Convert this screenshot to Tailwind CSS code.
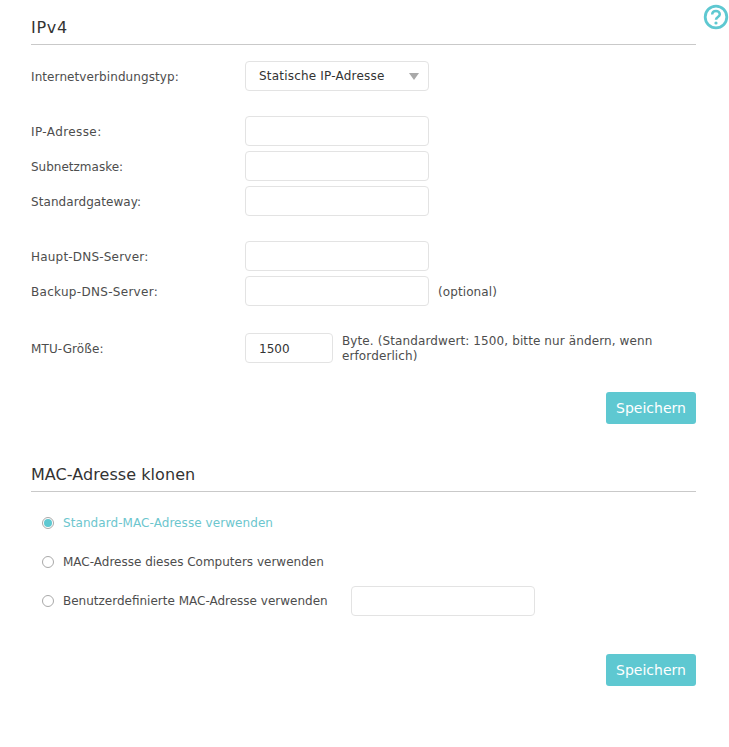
<!DOCTYPE html>
<html lang="en">
<head>
  <meta charset="UTF-8">
  <title>Internet</title>
  <script src="https://cdn.jsdelivr.net/npm/@tailwindcss/browser@4"></script>
</head>
<body class="bg-white text-[#4d4d4d] text-[12px] font-['DejaVu_Sans',sans-serif]">

<div class="relative w-[729px] h-[747px] overflow-hidden pl-[31px] pr-[33px]">
  <!-- Help icon -->
  <svg class="absolute left-[703px] top-[4px] w-[26px] h-[26px]" viewBox="0 0 26 26" fill="none" stroke="#5ec8d1">
    <circle cx="13" cy="13" r="10.8" stroke-width="2.8"/>
    <path d="M9.2 10.6c0-2.3 1.7-3.7 3.8-3.7s3.8 1.4 3.8 3.4c0 2.7-3.8 2.7-3.8 5.5" stroke-width="2.5"/>
    <circle cx="13" cy="19" r="1.6" fill="#5ec8d1" stroke="none"/>
  </svg>

  <!-- IPv4 -->
  <section class="pt-[17px]">
    <h2 class="h-[28px] border-b border-[#c9c9c9] text-[16px] leading-[22px] text-[#333] tracking-[0.7px]">IPv4</h2>

    <div class="mt-[16px] flex items-center h-[30px]">
      <label class="w-[214px] pt-[2px] tracking-[0.09px]">Internetverbindungstyp:</label>
      <div class="w-[184px] h-[30px] px-[13px] flex items-center justify-between border border-[#e3e3e3] rounded-[4px] text-[#333]">
        <span class="-mt-[1px] tracking-[0.2px]">Statische IP-Adresse</span>
        <span class="mr-[-4px] w-0 h-0 border-x-[5px] border-x-transparent border-t-[7px] border-t-[#a9a9a9]"></span>
      </div>
    </div>

    <div class="mt-[25px] flex flex-col gap-[5px]">
      <div class="flex items-center h-[30px]"><label class="w-[214px] pt-[2px] tracking-[0.4px]">IP-Adresse:</label><input class="w-[184px] h-[30px] border border-[#e3e3e3] rounded-[4px]"></div>
      <div class="flex items-center h-[30px]"><label class="w-[214px] pt-[2px]">Subnetzmaske:</label><input class="w-[184px] h-[30px] border border-[#e3e3e3] rounded-[4px]"></div>
      <div class="flex items-center h-[30px]"><label class="w-[214px] pt-[2px] tracking-[0.07px]">Standardgateway:</label><input class="w-[184px] h-[30px] border border-[#e3e3e3] rounded-[4px]"></div>
    </div>

    <div class="mt-[25px] flex flex-col gap-[5px]">
      <div class="flex items-center h-[30px]"><label class="w-[214px] pt-[2px] tracking-[0.2px]">Haupt-DNS-Server:</label><input class="w-[184px] h-[30px] border border-[#e3e3e3] rounded-[4px]"></div>
      <div class="flex items-center h-[30px]"><label class="w-[214px] pt-[2px] tracking-[0.3px]">Backup-DNS-Server:</label><input class="w-[184px] h-[30px] border border-[#e3e3e3] rounded-[4px]"><span class="ml-[9px] pt-[2px] tracking-[0.1px]">(optional)</span></div>
    </div>

    <div class="mt-[27px] flex items-center h-[30px]">
      <label class="w-[214px] pt-[2px] tracking-[0.1px]">MTU-Größe:</label>
      <input class="w-[88px] h-[30px] px-[13px] pt-[2px] border border-[#e3e3e3] rounded-[4px] text-[#333]" value="1500">
      <p class="ml-[9px] w-[340px] leading-[15px] pt-[1px] tracking-[0.11px]">Byte. (Standardwert: 1500, bitte nur ändern, wenn erforderlich)</p>
    </div>

    <div class="mt-[29px] flex justify-end">
      <button class="w-[90px] h-[32px] rounded-[3px] bg-[#5ec8d1] text-white text-[14px]">Speichern</button>
    </div>
  </section>

  <!-- MAC -->
  <section class="mt-[40px]">
    <h2 class="h-[28px] border-b border-[#c9c9c9] text-[16px] leading-[22px] text-[#333] tracking-[0.06px]">MAC-Adresse klonen</h2>

    <div class="mt-[16px] pl-[11px] flex flex-col">
      <div class="flex items-center h-[30px] text-[#6cc6ce]">
        <span class="w-[12px] h-[12px] rounded-full border border-[#a9a9a9] flex items-center justify-center"><span class="w-[8px] h-[8px] rounded-full bg-[#5ec8d1]"></span></span>
        <span class="ml-[9px] tracking-[0.07px]">Standard-MAC-Adresse verwenden</span>
      </div>
      <div class="mt-[9px] flex items-center h-[30px]">
        <span class="w-[12px] h-[12px] rounded-full border border-[#a9a9a9]"></span>
        <span class="ml-[9px]">MAC-Adresse dieses Computers verwenden</span>
      </div>
      <div class="mt-[9px] flex items-center h-[30px]">
        <span class="w-[12px] h-[12px] rounded-full border border-[#a9a9a9]"></span>
        <span class="ml-[9px] w-[288px]">Benutzerdefinierte MAC-Adresse verwenden</span>
        <input class="w-[184px] h-[30px] border border-[#e3e3e3] rounded-[4px]">
      </div>
    </div>

    <div class="mt-[38px] flex justify-end">
      <button class="w-[90px] h-[32px] rounded-[3px] bg-[#5ec8d1] text-white text-[14px]">Speichern</button>
    </div>
  </section>
</div>

</body>
</html>
